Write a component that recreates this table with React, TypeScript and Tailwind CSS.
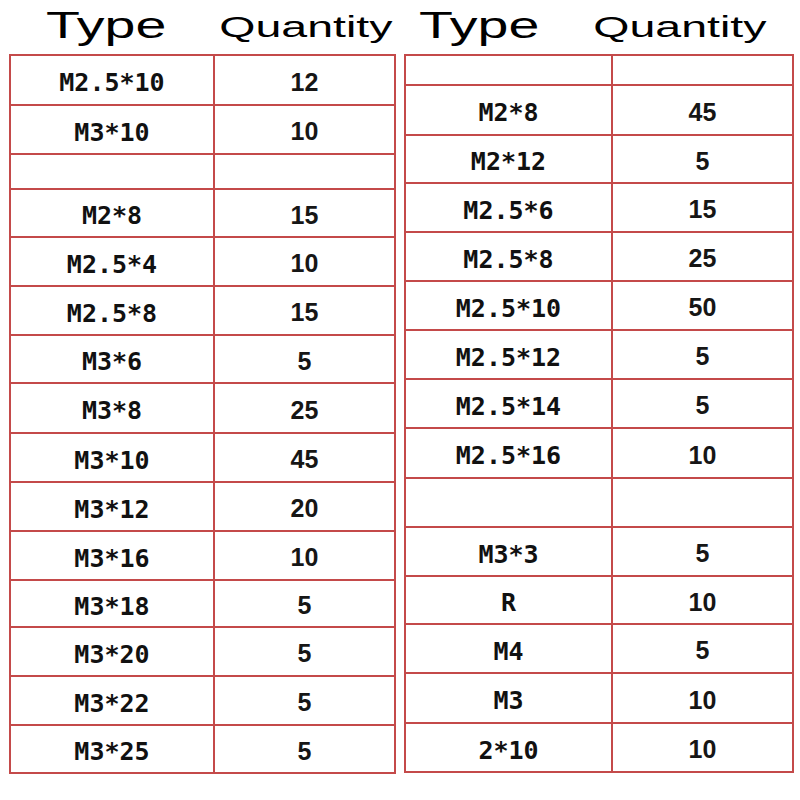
import React from 'react';

type Row = { t: string; q: string; h: string };

const leftRows: Row[] = [
  { t: 'M2.5*10', q: '12', h: 'h-[50px]' },
  { t: 'M3*10', q: '10', h: 'h-[49px]' },
  { t: '', q: '', h: 'h-[35px]' },
  { t: 'M2*8', q: '15', h: 'h-[48px]' },
  { t: 'M2.5*4', q: '10', h: 'h-[49px]' },
  { t: 'M2.5*8', q: '15', h: 'h-[49px]' },
  { t: 'M3*6', q: '5', h: 'h-[48px]' },
  { t: 'M3*8', q: '25', h: 'h-[50px]' },
  { t: 'M3*10', q: '45', h: 'h-[49px]' },
  { t: 'M3*12', q: '20', h: 'h-[49px]' },
  { t: 'M3*16', q: '10', h: 'h-[49px]' },
  { t: 'M3*18', q: '5', h: 'h-[47px]' },
  { t: 'M3*20', q: '5', h: 'h-[49px]' },
  { t: 'M3*22', q: '5', h: 'h-[49px]' },
  { t: 'M3*25', q: '5', h: 'h-[48px]' },
];

const rightRows: Row[] = [
  { t: '', q: '', h: 'h-[30px]' },
  { t: 'M2*8', q: '45', h: 'h-[50px]' },
  { t: 'M2*12', q: '5', h: 'h-[48px]' },
  { t: 'M2.5*6', q: '15', h: 'h-[49px]' },
  { t: 'M2.5*8', q: '25', h: 'h-[49px]' },
  { t: 'M2.5*10', q: '50', h: 'h-[49px]' },
  { t: 'M2.5*12', q: '5', h: 'h-[49px]' },
  { t: 'M2.5*14', q: '5', h: 'h-[49px]' },
  { t: 'M2.5*16', q: '10', h: 'h-[50px]' },
  { t: '', q: '', h: 'h-[49px]' },
  { t: 'M3*3', q: '5', h: 'h-[49px]' },
  { t: 'R', q: '10', h: 'h-[48px]' },
  { t: 'M4', q: '5', h: 'h-[49px]' },
  { t: 'M3', q: '10', h: 'h-[50px]' },
  { t: '2*10', q: '10', h: 'h-[49px]' },
];

const line = 'border-[#c44a4a]';

function Table({ rows, firstW }: { rows: Row[]; firstW: string }) {
  return (
    <div className={`border-t-2 ${line}`}>
      {rows.map((r, i) => (
        <div key={i} className={`flex border-b-2 ${line} ${r.h}`}>
          <div
            className={`${firstW} shrink-0 border-l-2 border-r-2 ${line} flex items-center justify-center pt-[6px] text-[25px] font-bold text-[#111] font-['DejaVu_Sans_Mono',monospace]`}
          >
            {r.t}
          </div>
          <div
            className={`w-[181px] shrink-0 border-r-2 ${line} flex items-center justify-center pt-[5px] text-[25px] font-bold text-[#161616] font-['Liberation_Sans',Arial,sans-serif]`}
          >
            {r.q}
          </div>
        </div>
      ))}
    </div>
  );
}

export default function App() {
  return (
    <div className="w-[800px] h-[800px] bg-white flex overflow-hidden">
      {/* left half */}
      <div className="ml-[9px] w-[387px] shrink-0">
        <div className="flex h-[54px] items-start font-['Liberation_Sans',Arial,sans-serif] text-black">
          <div className="w-[206px] shrink-0 flex justify-center pr-[11px] pt-[7px]">
            <span className="inline-block text-[37px] leading-none scale-x-[1.5]">Type</span>
          </div>
          <div className="w-[181px] shrink-0 flex justify-center pt-[12px]">
            <span className="inline-block text-[30px] leading-none scale-x-[1.55]">Quantity</span>
          </div>
        </div>
        <Table rows={leftRows} firstW="w-[206px]" />
      </div>

      {/* right half */}
      <div className="ml-[8px] w-[390px] shrink-0">
        <div className="flex h-[54px] items-start font-['Liberation_Sans',Arial,sans-serif] text-black">
          <div className="w-[209px] shrink-0 flex justify-center pr-[59px] pt-[7px]">
            <span className="inline-block text-[37px] leading-none scale-x-[1.5]">Type</span>
          </div>
          <div className="w-[181px] shrink-0 flex justify-center pr-[48px] pt-[12px]">
            <span className="inline-block text-[30px] leading-none scale-x-[1.55]">Quantity</span>
          </div>
        </div>
        <Table rows={rightRows} firstW="w-[209px]" />
      </div>
    </div>
  );
}
